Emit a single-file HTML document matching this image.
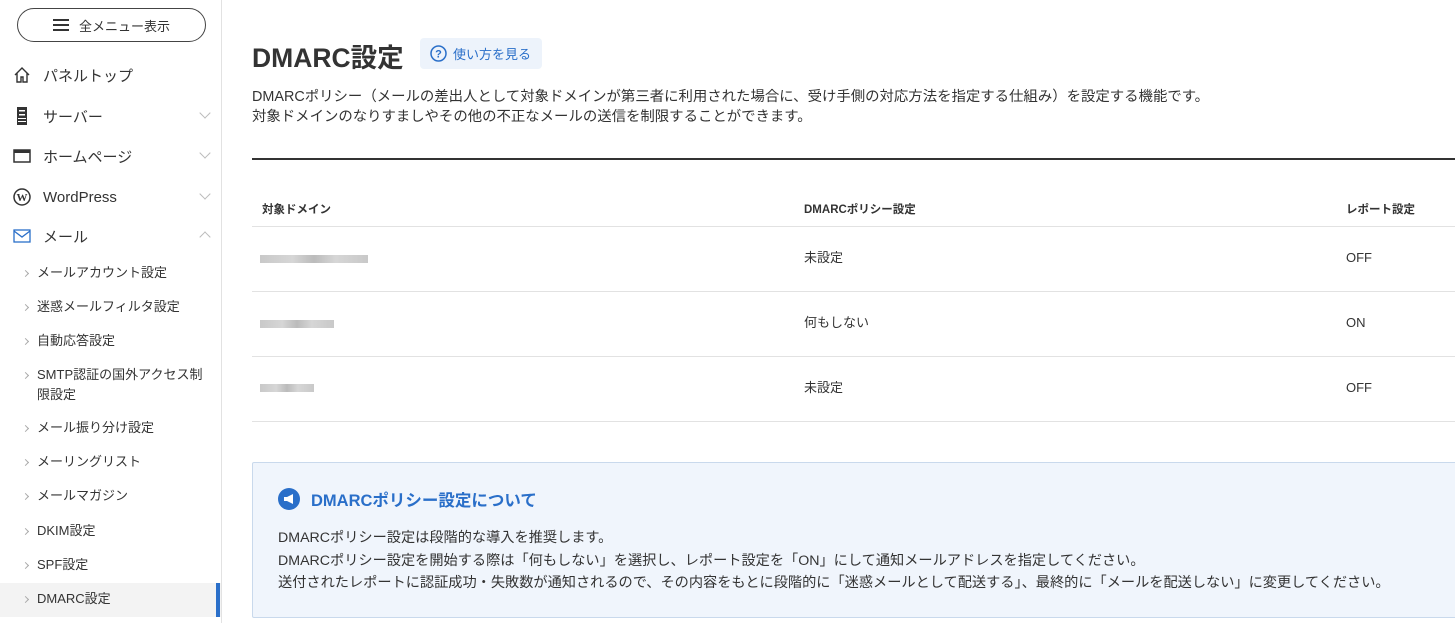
<!DOCTYPE html>
<html><head><meta charset="utf-8"><style>
*{margin:0;padding:0;box-sizing:border-box}
body{width:1455px;height:623px;overflow:hidden;background:#fff;font-family:"Liberation Sans","Noto Sans CJK JP",sans-serif;color:#333;position:relative}
.side{position:absolute;left:0;top:0;width:222px;height:623px;border-right:1px solid #e2e2e2;background:#fff}
.allbtn{position:absolute;left:17px;top:8px;width:189px;height:34px;border:1px solid #444;border-radius:17px;font-size:13px;display:flex;align-items:center;justify-content:center;gap:10px}
.nav{position:absolute;left:0;width:221px;height:40px;font-size:15px;display:flex;align-items:center}
.nav .ic{position:absolute;left:13px;top:11px;width:18px;height:18px}
.nav .t{position:absolute;left:43px}
.nav .ch{position:absolute;right:12px;top:13px;width:8px;height:8px;border-right:1px solid #bbb;border-bottom:1px solid #bbb;transform:rotate(45deg)}
.nav .ch.up{transform:rotate(-135deg);top:17px}
.sub{position:absolute;left:0;width:221px;font-size:13px;color:#333;line-height:20px}
.sub:before{content:"";position:absolute;left:23px;top:8px;width:4px;height:4px;border-right:1px solid #aaa;border-top:1px solid #aaa;transform:rotate(45deg)}
.sub span{position:absolute;left:37px;white-space:nowrap}
.main{position:absolute;left:252px;top:0;right:0}
h1{position:absolute;left:0;top:36px;font-size:26.5px;font-weight:bold;color:#333}
.help{position:absolute;left:168px;top:38px;width:122px;height:31px;background:#edf3fb;border-radius:4px;color:#2a6fc9;font-size:13px;display:flex;align-items:center;padding-left:10px;gap:6px}
.desc{position:absolute;left:0;top:87px;font-size:14.4px;line-height:20px;color:#333;white-space:nowrap}
.hr{position:absolute;left:0;top:158px;width:1203px;height:2px;background:#333}
.th{position:absolute;top:201px;font-size:11.5px;font-weight:bold;color:#333}
.line{position:absolute;left:0;width:1203px;height:1px;background:#e2e2e2}
.td{position:absolute;font-size:13px;line-height:16px;color:#333}
.blur{position:absolute;height:8px;background:linear-gradient(90deg,#bbb,#ccc 30%,#aaa 50%,#ccc 70%,#bbb);opacity:.8}
.info{position:absolute;left:0;top:462px;width:1210px;height:156px;background:#f0f5fc;border:1px solid #c9d9ec;border-radius:2px}
.info .tt{position:absolute;left:58px;top:24px;font-size:16.5px;font-weight:bold;color:#2a6fc9}
.info .ico{position:absolute;left:25px;top:25px;width:22px;height:22px;border-radius:50%;background:#2a6fc9}
.info .tx{position:absolute;left:25px;top:64px;font-size:14.2px;line-height:22.5px;color:#333;white-space:nowrap}
</style></head><body>
<div class="side">
 <div class="allbtn"><svg width="16" height="12"><rect y="0" width="16" height="2" fill="#333"/><rect y="5" width="16" height="2" fill="#333"/><rect y="10" width="16" height="2" fill="#333"/></svg><span>全メニュー表示</span></div>
 <div class="nav" style="top:55px"><svg class="ic" viewBox="0 0 18 18"><path d="M2 9L9 2l7 7M4 7v9h4v-5h2v5h4V7" fill="none" stroke="#333" stroke-width="1.4"/></svg><span class="t">パネルトップ</span></div>
 <div class="nav" style="top:96px"><svg class="ic" viewBox="0 0 18 18"><rect x="4" y="0" width="10" height="18" fill="#333"/><rect x="6" y="3" width="6" height="1.5" fill="#fff"/><rect x="6" y="7" width="6" height="1.5" fill="#fff"/><rect x="5" y="11" width="8" height="1" fill="#fff"/><rect x="5" y="14" width="8" height="1" fill="#fff"/></svg><span class="t">サーバー</span><i class="ch"></i></div>
 <div class="nav" style="top:136px"><svg class="ic" viewBox="0 0 18 18"><rect x="1" y="3" width="16" height="12" fill="none" stroke="#333" stroke-width="1.5"/><rect x="1" y="3" width="16" height="3" fill="#333"/></svg><span class="t">ホームページ</span><i class="ch"></i></div>
 <div class="nav" style="top:177px"><svg class="ic" viewBox="0 0 18 18"><circle cx="9" cy="9" r="8" fill="none" stroke="#333" stroke-width="1.5"/><text x="9" y="13" font-size="11" font-weight="bold" text-anchor="middle" fill="#333" font-family="Liberation Serif">W</text></svg><span class="t">WordPress</span><i class="ch"></i></div>
 <div class="nav" style="top:216px"><svg class="ic" viewBox="0 0 18 18"><rect x="1" y="3" width="16" height="12" fill="none" stroke="#2a6fc9" stroke-width="1.3"/><path d="M1 4l8 6 8-6" fill="none" stroke="#2a6fc9" stroke-width="1.3"/></svg><span class="t">メール</span><i class="ch up"></i></div>
 <div class="sub" style="top:263px"><span>メールアカウント設定</span></div>
 <div class="sub" style="top:297px"><span>迷惑メールフィルタ設定</span></div>
 <div class="sub" style="top:331px"><span>自動応答設定</span></div>
 <div class="sub" style="top:365px"><span>SMTP認証の国外アクセス制<br>限設定</span></div>
 <div class="sub" style="top:418px"><span>メール振り分け設定</span></div>
 <div class="sub" style="top:452px"><span>メーリングリスト</span></div>
 <div class="sub" style="top:486px"><span>メールマガジン</span></div>
 <div class="sub" style="top:521px"><span>DKIM設定</span></div>
 <div class="sub" style="top:555px"><span>SPF設定</span></div>
 <div style="position:absolute;left:0;top:583px;width:221px;height:34px;background:#f3f3f3"></div>
 <div style="position:absolute;left:216px;top:583px;width:4px;height:34px;background:#2a6fc9"></div>
 <div class="sub" style="top:589px"><span>DMARC設定</span></div>
</div>
<div class="main">
 <h1>DMARC設定</h1>
 <div class="help"><svg width="17" height="17" viewBox="0 0 17 17"><circle cx="8.5" cy="8.5" r="7.5" fill="none" stroke="#2a6fc9" stroke-width="1.5"/><text x="8.5" y="12.5" font-size="11" font-weight="bold" text-anchor="middle" fill="#2a6fc9" font-family="Liberation Sans">?</text></svg><span>使い方を見る</span></div>
 <div class="desc">DMARCポリシー（メールの差出人として対象ドメインが第三者に利用された場合に、受け手側の対応方法を指定する仕組み）を設定する機能です。<br>対象ドメインのなりすましやその他の不正なメールの送信を制限することができます。</div>
 <div class="hr"></div>
 <div class="th" style="left:10px">対象ドメイン</div>
 <div class="th" style="left:552px">DMARCポリシー設定</div>
 <div class="th" style="left:1094px">レポート設定</div>
 <div class="line" style="top:226px"></div>
 <div class="blur" style="left:8px;top:255px;width:108px"></div>
 <div class="td" style="left:552px;top:250px">未設定</div><div class="td" style="left:1094px;top:250px">OFF</div>
 <div class="line" style="top:291px"></div>
 <div class="blur" style="left:8px;top:320px;width:74px"></div>
 <div class="td" style="left:552px;top:315px">何もしない</div><div class="td" style="left:1094px;top:315px">ON</div>
 <div class="line" style="top:356px"></div>
 <div class="blur" style="left:8px;top:384px;width:54px"></div>
 <div class="td" style="left:552px;top:380px">未設定</div><div class="td" style="left:1094px;top:380px">OFF</div>
 <div class="line" style="top:421px"></div>
 <div class="info">
  <div class="ico"><svg width="22" height="22" viewBox="0 0 22 22"><path d="M6 9h3l6-3v10l-6-3H6z" fill="#fff"/></svg></div>
  <div class="tt">DMARCポリシー設定について</div>
  <div class="tx">DMARCポリシー設定は段階的な導入を推奨します。<br>DMARCポリシー設定を開始する際は「何もしない」を選択し、レポート設定を「ON」にして通知メールアドレスを指定してください。<br>送付されたレポートに認証成功・失敗数が通知されるので、その内容をもとに段階的に「迷惑メールとして配送する」、最終的に「メールを配送しない」に変更してください。</div>
 </div>
</div>
</body></html>
